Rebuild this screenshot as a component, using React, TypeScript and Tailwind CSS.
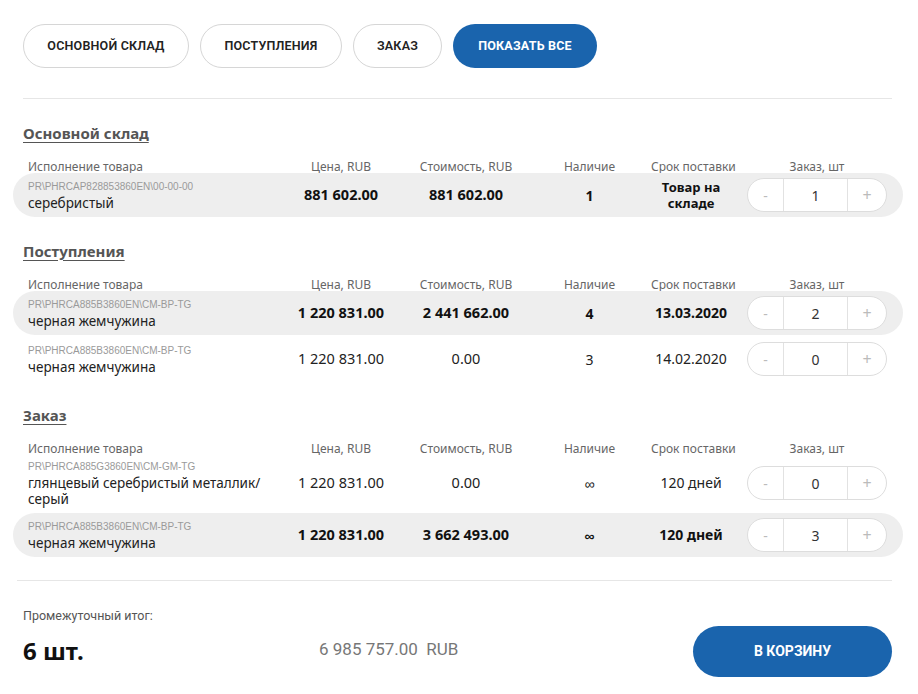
import React from 'react'

interface Item {
  code: string
  name: string
  price: string
  cost: string
  stock: string
  term: string
  qty: number
  active: boolean
}

interface Section {
  title: string
  items: Item[]
}

const sections: Section[] = [
  {
    title: 'Основной склад',
    items: [
      {
        code: 'PR\\PHRCAP828853860EN\\00-00-00',
        name: 'серебристый',
        price: '881 602.00',
        cost: '881 602.00',
        stock: '1',
        term: 'Товар на складе',
        qty: 1,
        active: true,
      },
    ],
  },
  {
    title: 'Поступления',
    items: [
      {
        code: 'PR\\PHRCA885B3860EN\\CM-BP-TG',
        name: 'черная жемчужина',
        price: '1 220 831.00',
        cost: '2 441 662.00',
        stock: '4',
        term: '13.03.2020',
        qty: 2,
        active: true,
      },
      {
        code: 'PR\\PHRCA885B3860EN\\CM-BP-TG',
        name: 'черная жемчужина',
        price: '1 220 831.00',
        cost: '0.00',
        stock: '3',
        term: '14.02.2020',
        qty: 0,
        active: false,
      },
    ],
  },
  {
    title: 'Заказ',
    items: [
      {
        code: 'PR\\PHRCA885G3860EN\\CM-GM-TG',
        name: 'глянцевый серебристый металлик/ серый',
        price: '1 220 831.00',
        cost: '0.00',
        stock: '∞',
        term: '120 дней',
        qty: 0,
        active: false,
      },
      {
        code: 'PR\\PHRCA885B3860EN\\CM-BP-TG',
        name: 'черная жемчужина',
        price: '1 220 831.00',
        cost: '3 662 493.00',
        stock: '∞',
        term: '120 дней',
        qty: 3,
        active: true,
      },
    ],
  },
]

const tabs = [
  { label: 'Основной склад', w: 'w-[166px]' },
  { label: 'Поступления', w: 'w-[142px]' },
  { label: 'Заказ', w: 'w-[89px]' },
]

const cols = 'grid grid-cols-[250px_126px_124px_123px_80px_172px] items-center'
const narrow = "font-['Liberation_Sans_Narrow','Roboto',sans-serif]"

function Stepper({ value }: { value: number }) {
  return (
    <div className="ml-4 flex h-[34px] w-[140px] items-stretch rounded-full border border-[#dddddd] bg-white text-[14px]">
      <button className="w-[36px] border-r border-[#e2e2e2] text-[#bbbbbb]">-</button>
      <div className="flex w-[64px] items-center justify-center border-r border-[#e2e2e2] text-[#333]">{value}</div>
      <button className="flex-1 text-[16px] text-[#bbbbbb]">+</button>
    </div>
  )
}

function Row({ item }: { item: Item }) {
  const strong = item.active ? 'font-bold text-[#111]' : 'text-[#222]'
  return (
    <div className={`${cols} min-h-[44px] rounded-full py-[4px] pl-[15px] ${item.active ? 'bg-[#eeeeee]' : ''}`}>
      <div className="leading-[16px]">
        <div className="font-['Liberation_Sans',sans-serif] text-[10px] text-[#9a9a9a]">{item.code}</div>
        <div className="text-[13.5px] text-[#222]">{item.name}</div>
      </div>
      <div className={`text-center text-[14.5px] ${strong}`}>{item.price}</div>
      <div className={`text-center text-[14.5px] ${strong}`}>{item.cost}</div>
      <div className={`text-center text-[14px] ${strong}`}>{item.stock}</div>
      <div className={`text-center leading-[16px] ${item.term.length > 10 ? 'text-[13px]' : 'text-[14px]'} ${strong}`}>
        {item.term}
      </div>
      <Stepper value={item.qty} />
    </div>
  )
}

export default function App() {
  return (
    <div className="min-h-[694px] w-[918px] bg-white pl-[13px] pr-[15px] pt-[24px] font-['Noto_Sans',sans-serif] text-[#222]">
      {/* Tabs */}
      <div className={`flex gap-[11px] pl-[10px] ${narrow}`}>
        {tabs.map((t) => (
          <button
            key={t.label}
            className={`${t.w} h-[44px] rounded-full border border-[#d6d6d6] bg-white text-[12.5px] font-semibold uppercase tracking-[0.2px] text-[#222]`}
          >
            {t.label}
          </button>
        ))}
        <button className="h-[44px] w-[144px] rounded-full bg-[#1a64ad] text-[12.5px] font-bold uppercase tracking-[0.2px] text-white">
          Показать все
        </button>
      </div>

      <div className="ml-[10px] mr-[11px] mt-[30px] border-t border-[#e6e6e6]" />

      {/* Sections */}
      <div className="pt-[24px]">
        {sections.map((s) => (
          <div key={s.title} className="mb-[24px] last:mb-[23px]">
            <h3 className="pl-[10px] text-[15px] font-bold leading-[20px] text-[#555] underline underline-offset-[3px]">
              {s.title}
            </h3>
            <div className={`${cols} mt-[18px] pl-[15px] text-[12px] leading-[12px] text-[#666]`}>
              <div>Исполнение товара</div>
              <div className="text-center">Цена, RUB</div>
              <div className="text-center">Стоимость, RUB</div>
              <div className="text-center">Наличие</div>
              <div className="text-center whitespace-nowrap">Срок поставки</div>
              <div className="ml-4 w-[140px] text-center">Заказ, шт</div>
            </div>
            <div className="flex flex-col gap-[2px]">
              {s.items.map((it, i) => (
                <Row key={i} item={it} />
              ))}
            </div>
          </div>
        ))}
      </div>

      <div className="ml-[4px] mr-[11px] mt-[3px] border-t border-[#e6e6e6]" />

      {/* Total */}
      <div className="flex items-end justify-between pb-[16px] pl-[10px] pr-[11px] pt-[26px]">
        <div className="flex items-end">
          <div className="w-[296px]">
            <div className={`${narrow} text-[12.5px] text-[#555]`}>Промежуточный итог:</div>
            <div className="mt-[11px] pb-[12px] text-[24px] font-bold leading-[28px] text-[#111]">6 шт.</div>
          </div>
          <div className={`${narrow} pb-[14px] text-[17px] text-[#777]`}>6 985 757.00&nbsp; RUB</div>
        </div>
        <button className={`${narrow} h-[51px] w-[199px] rounded-full bg-[#1a64ad] text-[14px] font-bold uppercase text-white`}>
          В корзину
        </button>
      </div>
    </div>
  )
}
